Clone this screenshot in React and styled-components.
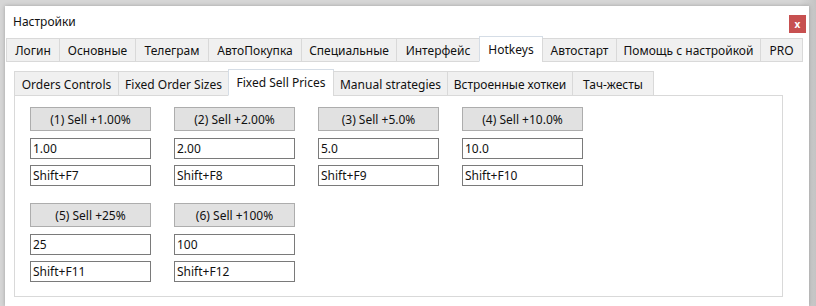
import React from "react";
import styled, { createGlobalStyle } from "styled-components";

const GlobalStyle = createGlobalStyle`
  html, body {
    margin: 0;
    padding: 0;
    overflow: hidden;
    background: #d3d3d3;
  }
  body {
    font-family: "Noto Sans", "Segoe UI", sans-serif;
    font-size: 12px;
    color: #111;
  }
`;

const Screen = styled.div`
  width: 816px;
  height: 306px;
  overflow: hidden;
  padding: 6px 0 0 5px;
  box-sizing: border-box;
  background: linear-gradient(to right, #d6d6d6 0, #d6d6d6 98%, #c4c4c4 100%);
`;

const Window = styled.div`
  width: 804px;
  height: 300px;
  background: #fff;
  box-shadow: 0 0 4px rgba(0, 0, 0, 0.25);
  display: flex;
  flex-direction: column;
`;

const TitleBar = styled.div`
  height: 30px;
  display: flex;
  align-items: center;
  justify-content: space-between;
  padding: 0 3px 0 8px;
`;

const Title = styled.span`
  font-size: 12px;
  margin-top: 1px;
`;

const CloseButton = styled.div`
  width: 17px;
  height: 18px;
  background: #c75050;
  color: #fff;
  font-size: 10px;
  font-weight: bold;
  display: flex;
  align-items: center;
  justify-content: center;
  margin-top: 6px;
  line-height: 1;
`;

const Tabs = styled.div`
  display: flex;
  align-items: flex-end;
  height: ${(p) => p.$h}px;
  margin-left: ${(p) => p.$left}px;
  position: relative;
  z-index: 1;
`;

const Tab = styled.div`
  width: ${(p) => p.$w}px;
  box-sizing: border-box;
  height: ${(p) => (p.$active ? p.$h + 2 : p.$h)}px;
  display: flex;
  align-items: center;
  justify-content: center;
  white-space: nowrap;
  background: ${(p) => (p.$active ? "#fff" : "#f0f0f0")};
  border: 1px solid ${(p) => (p.$active ? "#d5dde6" : "#d9d9d9")};
  border-bottom: ${(p) => (p.$active ? "1px solid #fff" : "1px solid #d9d9d9")};
  margin-left: -1px;
  padding-top: ${(p) => (p.$active ? 0 : 1)}px;
  &:first-child {
    margin-left: 0;
  }
`;

const TabBody = styled.div`
  flex: 1;
  padding: 8px 0 0 9px;
  margin-top: -1px;
`;

const Panel = styled.div`
  width: 769px;
  height: 202px;
  box-sizing: border-box;
  border: 1px solid #d9d9d9;
  margin-top: -1px;
  padding: 11px 0 0 15px;
`;

const Grid = styled.div`
  display: grid;
  grid-template-columns: repeat(4, 121px);
  column-gap: 23px;
  row-gap: 17px;
`;

const Group = styled.div`
  display: flex;
  flex-direction: column;
`;

const SellButton = styled.div`
  height: 24px;
  box-sizing: border-box;
  background: #e1e1e1;
  border: 1px solid #adadad;
  display: flex;
  align-items: center;
  justify-content: center;
  margin-bottom: 7px;
`;

const Field = styled.div`
  height: 21px;
  box-sizing: border-box;
  border: 1px solid #7a7a7a;
  display: flex;
  align-items: center;
  padding: 0 0 0 2px;
  & + & {
    margin-top: 6px;
  }
`;

const mainTabs = [
  ["Логин", 54],
  ["Основные", 77],
  ["Телеграм", 74],
  ["АвтоПокупка", 94],
  ["Специальные", 96],
  ["Интерфейс", 84],
  ["Hotkeys", 64],
  ["Автостарт", 75],
  ["Помощь с настройкой", 145],
  ["PRO", 43],
];

const subTabs = [
  ["Orders Controls", 105],
  ["Fixed Order Sizes", 111],
  ["Fixed Sell Prices", 106],
  ["Manual strategies", 115],
  ["Встроенные хоткеи", 126],
  ["Тач-жесты", 82],
];

const sells = [
  ["(1) Sell +1.00%", "1.00", "Shift+F7"],
  ["(2) Sell +2.00%", "2.00", "Shift+F8"],
  ["(3) Sell +5.0%", "5.0", "Shift+F9"],
  ["(4) Sell +10.0%", "10.0", "Shift+F10"],
  ["(5) Sell +25%", "25", "Shift+F11"],
  ["(6) Sell +100%", "100", "Shift+F12"],
];

export default function App() {
  return (
    <>
      <GlobalStyle />
      <Screen>
        <Window>
          <TitleBar>
            <Title>Настройки</Title>
            <CloseButton>x</CloseButton>
          </TitleBar>
          <Tabs $h={26} $left={1}>
            {mainTabs.map(([name, w]) => (
              <Tab key={name} $w={w} $h={24} $active={name === "Hotkeys"}>
                {name}
              </Tab>
            ))}
          </Tabs>
          <TabBody>
            <Tabs $h={27} $left={0}>
              {subTabs.map(([name, w]) => (
                <Tab key={name} $w={w} $h={25} $active={name === "Fixed Sell Prices"}>
                  {name}
                </Tab>
              ))}
            </Tabs>
            <Panel>
              <Grid>
                {sells.map(([label, value, key]) => (
                  <Group key={label}>
                    <SellButton>{label}</SellButton>
                    <Field>{value}</Field>
                    <Field>{key}</Field>
                  </Group>
                ))}
              </Grid>
            </Panel>
          </TabBody>
        </Window>
      </Screen>
    </>
  );
}
